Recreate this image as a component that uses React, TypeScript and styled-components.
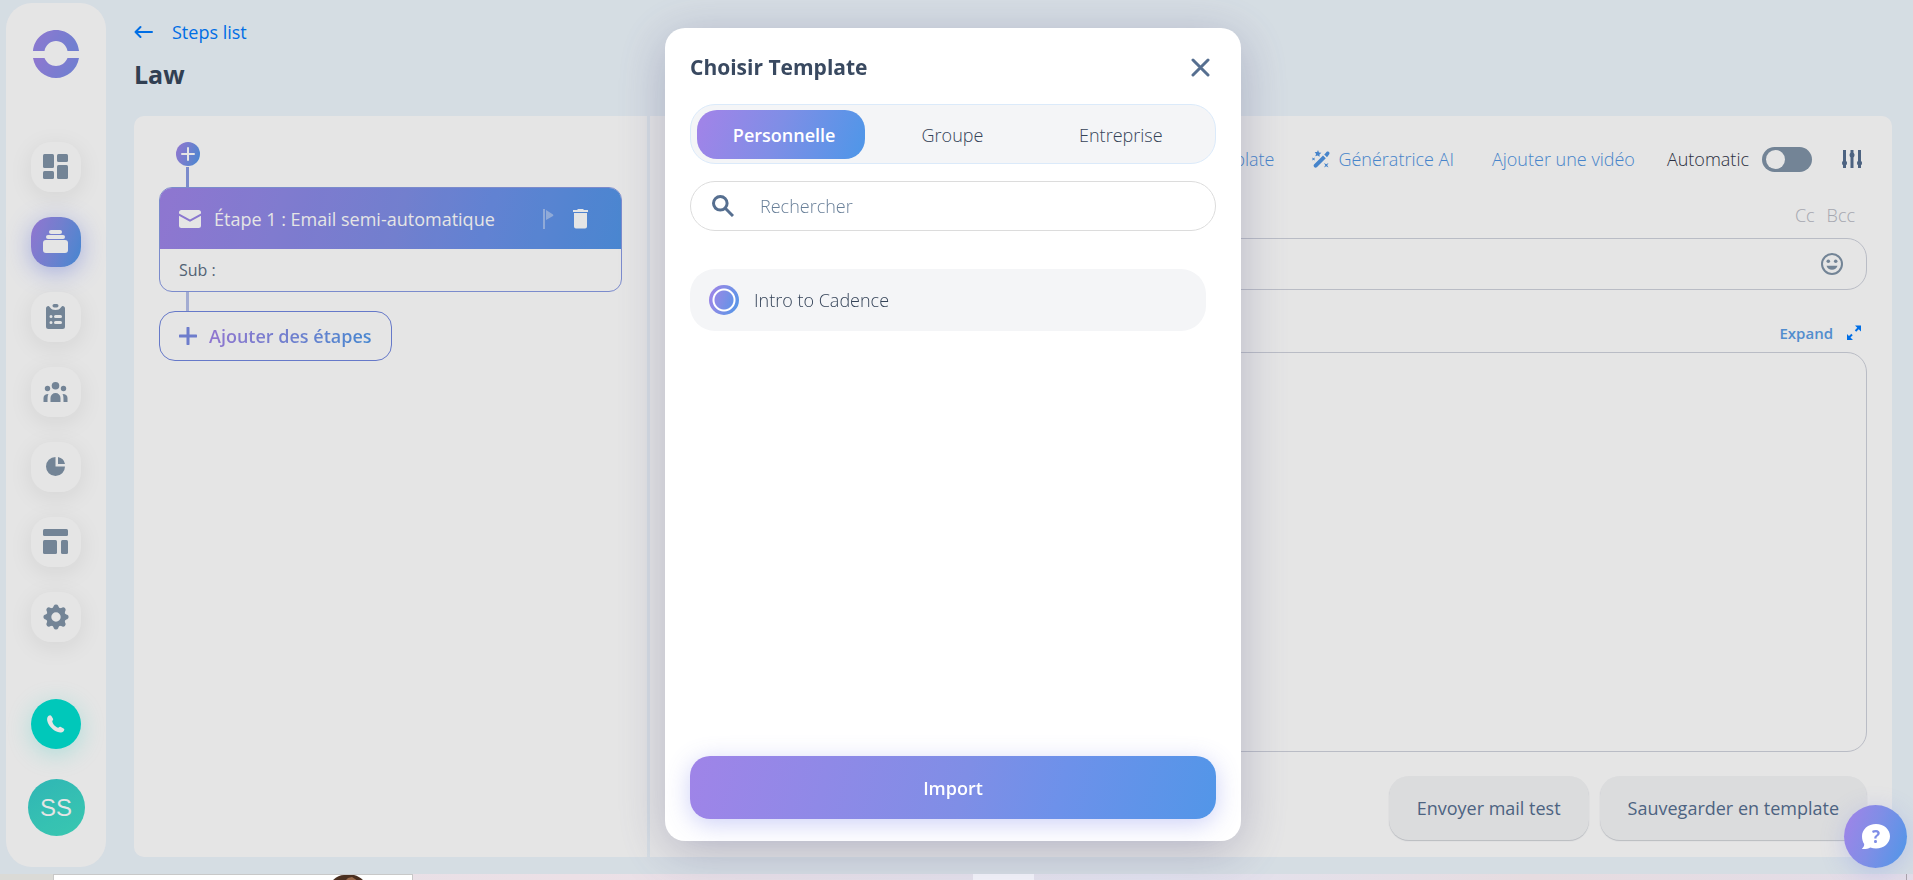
import React, { useState } from 'react';
import styled, { createGlobalStyle, css } from 'styled-components';

const gradient = 'linear-gradient(105deg, #9f84e8 0%, #7f8ee6 52%, #6d91ea 70%, #5296e8 100%)';
const shortGradient = 'linear-gradient(110deg, #9f84e8 5%, #7f8ee6 48%, #5296e8 95%)';

const GlobalStyle = createGlobalStyle`
  *, *::before, *::after { box-sizing: border-box; }
  body {
    margin: 0;
    background: #eef6fd;
    color: #344358;
    font-family: 'Open Sans', 'Liberation Sans', sans-serif;
    font-size: 18px;
    line-height: 24px;
  }
  button, input, textarea { font: inherit; color: inherit; }
  button { border: 0; padding: 0; background: none; cursor: pointer; }
  svg { display: block; flex: none; }
  a { text-decoration: none; }
`;

const Page = styled.div`
  min-height: 100vh;
  display: flex;
  flex-direction: column;
`;

const Workspace = styled.div`
  flex: 1;
  display: flex;
  gap: 28px;
  padding: 3px 21px 7px 6px;
`;

/* Sidebar */

const Sidebar = styled.aside`
  width: 100px;
  flex: none;
  display: flex;
  flex-direction: column;
  align-items: center;
  padding: 27px 0 31px;
  border-radius: 26px;
  background: #fff;
`;

const Nav = styled.nav`
  display: flex;
  flex-direction: column;
  gap: 25px;
  margin: 64px 0 56px;
`;

const NavButton = styled.button<{ $active?: boolean }>`
  width: 50px;
  height: 50px;
  display: grid;
  place-items: center;
  border-radius: 20px;
  color: ${(p) => (p.$active ? '#fff' : '#8094a8')};
  background: ${(p) => (p.$active ? shortGradient : '#fff')};
  box-shadow: 0 5px 25px ${(p) => (p.$active ? 'rgba(100, 120, 240, 0.45)' : 'rgba(0, 0, 0, 0.08)')};
`;

const CallButton = styled.button`
  width: 50px;
  height: 50px;
  display: grid;
  place-items: center;
  margin-top: auto;
  border-radius: 50%;
  color: #fff;
  background: #00dfd0;
  box-shadow: 0 5px 25px rgba(0, 223, 208, 0.25);
`;

const Avatar = styled.button`
  width: 57px;
  height: 57px;
  margin-top: 30px;
  border-radius: 50%;
  background: linear-gradient(150deg, #35cbca, #41dfc5);
  color: #fff;
  font-family: 'Liberation Sans', Arial, sans-serif;
  font-size: 24px;
`;

/* Page head and panel */

const Main = styled.main`
  flex: 1;
  min-width: 0;
  display: flex;
  flex-direction: column;
  padding: 17px 0 10px;
`;

const BackLink = styled.a`
  display: flex;
  align-items: center;
  gap: 19px;
  align-self: flex-start;
  color: #007bff;
`;

const PageTitle = styled.h1`
  margin: 13px 0 25px;
  color: #37475c;
  font-size: 25px;
  font-weight: 700;
  line-height: 34px;
`;

const Panel = styled.div`
  flex: 1;
  display: grid;
  grid-template-columns: 513px 1fr;
  gap: 3px;
  border-radius: 10px;
  overflow: hidden;
`;

const StepsColumn = styled.section`
  display: flex;
  flex-direction: column;
  align-items: flex-start;
  padding: 26px 25px;
  background: #fff;
`;

const InsertButton = styled.button`
  width: 24px;
  height: 24px;
  display: grid;
  place-items: center;
  margin-left: 17px;
  border-radius: 50%;
  background: ${shortGradient};
  color: #fff;
`;

const Connector = styled.div<{ $faint?: boolean }>`
  width: 3px;
  height: ${(p) => (p.$faint ? 19 : 20)}px;
  margin-top: ${(p) => (p.$faint ? 0 : 1)}px;
  margin-left: 27px;
  background: ${(p) => (p.$faint ? '#b6c0ea' : '#8a9be4')};
`;

const StepCard = styled.article`
  align-self: stretch;
  border: 1px solid #8a9be4;
  border-radius: 13px;
  overflow: hidden;
`;

const StepHead = styled.header`
  height: 61px;
  display: flex;
  align-items: center;
  gap: 13px;
  padding: 0 32px 0 19px;
  background: ${gradient};
  color: #fff;
`;

const StepTitle = styled.h2`
  flex: 1;
  margin: 0;
  font-size: 18px;
  font-weight: 500;
`;

const StepActions = styled.div`
  display: flex;
  align-items: center;
  gap: 19px;
`;

const StepSubject = styled.p`
  margin: 0;
  padding: 9px 19px;
  color: #5b6d82;
  font-size: 16px;
`;

const AddStepButton = styled.button`
  height: 50px;
  display: flex;
  align-items: center;
  gap: 12px;
  padding: 0 19px;
  border: 1px solid #7287e0;
  border-radius: 16px;
  color: #7b8ce4;
`;

const GradientText = styled.span`
  background: ${shortGradient};
  background-clip: text;
  color: transparent;
  font-weight: 600;
`;

/* Editor */

const Editor = styled.section`
  display: flex;
  flex-direction: column;
  padding: 28px 25px 17px 24px;
  background: #fff;
`;

const Toolbar = styled.div`
  height: 30px;
  display: flex;
  align-items: center;
  justify-content: flex-end;
  gap: 38px;
  padding-right: 5px;
  font-weight: 300;
`;

const ToolLink = styled.button`
  display: flex;
  align-items: center;
  gap: 7px;
  color: #4f94e2;
  font-weight: 300;
`;

const ToolGroup = styled.div`
  display: flex;
  align-items: center;
  gap: 30px;
  margin-left: -6px;
`;

const SwitchLabel = styled.label`
  display: flex;
  align-items: center;
  gap: 13px;
  color: #2f3447;
`;

const Switch = styled.input`
  appearance: none;
  width: 50px;
  height: 25px;
  margin: 0;
  padding: 3px 4px;
  border-radius: 13px;
  background: #8094a8;
  &::before {
    content: '';
    display: block;
    width: 19px;
    height: 19px;
    border-radius: 50%;
    background: #fff;
  }
  &:checked { background: #5296e8; }
  &:checked::before { margin-left: auto; }
`;

const IconButton = styled.button`
  display: grid;
  place-items: center;
  color: #566f90;
`;

const CopyRow = styled.div`
  display: flex;
  justify-content: flex-end;
  gap: 12px;
  margin: 29px 0 11px;
  padding-right: 12px;
`;

const CopyButton = styled.button`
  color: #b8bac4;
  font-weight: 300;
`;

const fieldFrame = css`
  border: 1px solid #cfd2dc;
  border-radius: 20px;
  background: #fff;
`;

const SubjectField = styled.div`
  ${fieldFrame}
  height: 52px;
  display: flex;
  align-items: center;
  padding: 0 23px;
`;

const SubjectInput = styled.input`
  flex: 1;
  min-width: 0;
  border: 0;
  outline: 0;
  background: none;
`;

const EmojiButton = styled.button`
  color: #8094a8;
`;

const ExpandButton = styled.button`
  align-self: flex-end;
  display: flex;
  align-items: center;
  gap: 13px;
  margin: 31px 5px 7px 0;
  color: #5b9de6;
  font-size: 15px;
  font-weight: 600;
`;

const MessageBox = styled.textarea`
  ${fieldFrame}
  flex: 1;
  width: 100%;
  min-height: 200px;
  padding: 16px;
  resize: none;
  outline: 0;
`;

const EditorFooter = styled.div`
  display: flex;
  justify-content: flex-end;
  gap: 11px;
  margin-top: 24px;
`;

const SoftButton = styled.button`
  height: 64px;
  padding: 0 28px;
  border-radius: 20px;
  background: #f4f5f7;
  box-shadow: 0 1px 1px rgba(60, 70, 90, 0.25);
  color: #566f90;
  font-weight: 500;
`;

/* Edge of the window that lies behind the app */

const Backdrop = styled.footer`
  height: 6px;
  display: flex;
  background: linear-gradient(90deg, #e2dfe8, #ece0e6 30%, #e3e3f0 60%, #e6dce0 80%, #e3dde8);
`;

const BackdropWall = styled.div`
  width: 53px;
  background: #dadad6;
`;

const BackdropCard = styled.div`
  width: 360px;
  padding-left: 278px;
  overflow: hidden;
  border: 1px solid #c8c8c8;
  border-bottom: 0;
  background: #fff;
`;

const BackdropTab = styled.div`
  width: 61px;
  margin-left: auto;
  background: #f5f5fb;
`;

const BackdropRest = styled.div`
  flex: 0 1 873px;
  margin-right: 6px;
  border-right: 1px solid #aaa4aa;
`;

/* Modal */

const Scrim = styled.div`
  position: fixed;
  inset: 0 0 6px;
  background: rgba(0, 0, 0, 0.1);
`;

const ModalLayer = styled.div`
  position: fixed;
  inset: 0;
  display: flex;
  justify-content: center;
  padding: 28px 7px 39px 0;
`;

const Modal = styled.div`
  width: 576px;
  display: flex;
  flex-direction: column;
  padding: 22px 25px;
  border-radius: 20px;
  background: #fff;
  box-shadow: 0 10px 50px rgba(70, 70, 120, 0.3);
`;

const ModalHead = styled.header`
  display: flex;
  align-items: center;
  justify-content: space-between;
  padding-right: 6px;
`;

const ModalTitle = styled.h2`
  margin: 0;
  color: #394960;
  font-size: 21px;
  font-weight: 700;
  line-height: 34px;
`;

const Tabs = styled.div`
  height: 60px;
  display: grid;
  grid-template-columns: repeat(3, 1fr);
  margin-top: 20px;
  padding: 5px 10px 4px 9px;
  border: 1px solid #dbeafa;
  border-radius: 25px;
  background: #f4f5f7;
`;

const Tab = styled.button<{ $active: boolean }>`
  border-radius: 20px;
  font-weight: 300;
  ${(p) =>
    p.$active &&
    css`
      margin: 0 3px 0 -3px;
      padding-left: 6px;
      background: ${shortGradient};
      color: #fff;
      font-weight: 600;
    `}
`;

const SearchField = styled.label`
  height: 50px;
  display: flex;
  align-items: center;
  gap: 26px;
  margin-top: 17px;
  padding: 0 21px;
  border: 1px solid #dcdcdc;
  border-radius: 25px;
  color: #566f90;
`;

const SearchInput = styled.input`
  flex: 1;
  min-width: 0;
  padding: 0;
  border: 0;
  outline: 0;
  background: none;
  font-weight: 300;
  &::placeholder { color: #687f98; opacity: 1; }
`;

const TemplateList = styled.div`
  flex: 1;
  padding: 38px 10px 0 0;
`;

const TemplateOption = styled.label`
  height: 62px;
  display: flex;
  align-items: center;
  gap: 15px;
  padding: 0 19px;
  border-radius: 25px;
  background: #f4f5f7;
  font-weight: 300;
`;

const Radio = styled.input`
  appearance: none;
  width: 30px;
  height: 30px;
  margin: 0;
  border-radius: 50%;
  background: radial-gradient(circle, transparent 9px, #fff 10px 11px, transparent 12px), ${shortGradient};
`;

const ImportButton = styled.button`
  height: 63px;
  border-radius: 20px;
  background: ${gradient};
  box-shadow: 0 5px 25px rgba(90, 100, 230, 0.3);
  color: #fff;
  font-weight: 600;
`;

const HelpButton = styled.button`
  position: fixed;
  right: 6px;
  bottom: 12px;
  width: 63px;
  height: 63px;
  display: grid;
  place-items: center;
  border-radius: 50%;
  background: ${shortGradient};
  box-shadow: 0 5px 25px rgba(100, 120, 240, 0.25);
`;

/* Drawings */

const Logo = () => (
  <svg width="48" height="48" viewBox="0 0 48 48" role="img" aria-label="Logo">
    <defs>
      <linearGradient id="logo" x1="0" y1="0" x2="1" y2="0.3">
        <stop offset="0" stopColor="#a085e8" />
        <stop offset="1" stopColor="#7e8ee8" />
      </linearGradient>
    </defs>
    <path fill="url(#logo)" d="M1 21C2 9 12 0 24 0s22 9 23 21H35.5c-1-6-6-10-11.5-10s-10.500 4-11.500 10z" />
    <path fill="url(#logo)" d="M1 28h11.500c2 5 6.500 8 11.500 8s9.500-3 11.500-8H47c-2 12-12 20-23 20S3 40 1 28z" />
  </svg>
);

const DashboardIcon = () => (
  <svg width="26" height="26" viewBox="0 0 26 26" fill="currentColor">
    <rect width="11" height="14" rx="1.5" /><rect x="14" width="11" height="8" rx="1.5" />
    <rect y="17" width="11" height="8" rx="1.5" /><rect x="14" y="11" width="11" height="14" rx="1.5" />
  </svg>
);

const CadenceIcon = () => (
  <svg width="26" height="26" viewBox="0 0 26 26" fill="currentColor">
    <rect x="6" y="1" width="13" height="4" rx="2" /><rect x="3" y="6" width="19" height="4" rx="2" />
    <rect y="11" width="25" height="13" rx="3" />
  </svg>
);

const TasksIcon = () => (
  <svg width="20" height="26" viewBox="0 0 20 26" fill="currentColor">
    <rect x="6.5" width="6" height="3.5" rx="1.7" />
    <path fillRule="evenodd" d="M2.500 2C4 2 4 6 9.500 6S15 2 16.500 2C18 2 19 3 19 4.500V22.500A2.500 2.500 0 0 1 16.500 25h-14A2.500 2.500 0 0 1 0 22.500V4.500C0 3 1 2 2.500 2zM5 11a1.500 1.500 0 1 0 0 3 1.500 1.500 0 0 0 0-3zm4.500 0a1.500 1.500 0 0 0 0 3h5a1.500 1.500 0 0 0 0-3zM5 17a1.500 1.500 0 1 0 0 3 1.500 1.500 0 0 0 0-3zm4.500 0a1.500 1.500 0 0 0 0 3h5a1.500 1.500 0 0 0 0-3z" />
  </svg>
);

const PeopleIcon = () => (
  <svg width="26" height="20" viewBox="0 0 26 20" fill="currentColor">
    <circle cx="12.5" cy="3.8" r="3.8" /><circle cx="4.5" cy="6.5" r="2.7" /><circle cx="20.5" cy="6.5" r="2.7" />
    <path d="M7.500 20v-4a5 5 0 0 1 10 0v4zM.5 20v-4c0-2.600 2-4 5-4-1 1.500-1 4-1 8zM24.500 20v-4c0-2.600-2-4-5-4 1 1.500 1 4 1 8z" />
  </svg>
);

const PieIcon = () => (
  <svg width="20" height="20" viewBox="0 0 20 20" fill="currentColor">
    <path d="M9.500 0v9.500H19A9.500 9.500 0 1 1 9.500 0z" /><path d="M12 0a9 9 0 0 1 7 7h-7z" />
  </svg>
);

const LayoutIcon = () => (
  <svg width="26" height="26" viewBox="0 0 26 26" fill="currentColor">
    <rect width="25" height="7" rx="1.5" /><rect y="11" width="14" height="14" rx="1.5" /><rect x="18" y="11" width="7" height="14" rx="1.5" />
  </svg>
);

const GearIcon = () => (
  <svg width="26" height="26" viewBox="-13 -13 26 26">
    <circle r="7.2" fill="none" stroke="currentColor" strokeWidth="5" />
    {[0, 45, 90, 135, 180, 225, 270, 315].map((a) => (
      <path key={a} transform={`rotate(${a})`} fill="currentColor" d="M-4.200-8.500C-3-9-2.600-10-2.200-11.200Q-1.600-12.600 0-12.600T2.200-11.200C2.600-10 3-9 4.200-8.500z" />
    ))}
  </svg>
);

const PhoneIcon = () => (
  <svg width="18" height="18" viewBox="0 0 18 18" fill="currentColor">
    <path d="M1.600.7C2.800-.2 3.800 0 4.400 1l1.500 2.600c.5.900.2 1.500-.7 2.400.4 3 3 6 6.200 6.800.9-1.100 1.500-1.400 2.500-.9l2.700 1.500c.9.600 1 1.500.2 2.500-1.300 1.600-3.600 2-5.900 1.200C5.500 15 1 10.200.2 5.400-.1 3.500.3 1.800 1.600.7z" />
  </svg>
);

const ArrowLeft = () => (
  <svg width="19" height="14" viewBox="0 0 19 14" fill="none" stroke="currentColor" strokeWidth="2" strokeLinecap="round" strokeLinejoin="round">
    <path d="M18 7H1.500M6.500 2l-5 5 5 5" />
  </svg>
);

const PlusIcon = ({ size, weight }: { size: number; weight: number }) => (
  <svg width={size} height={size} viewBox={`0 0 ${size} ${size}`} stroke="currentColor" strokeWidth={weight} strokeLinecap="round">
    <path d={`M${size / 2} 1v${size - 2}M1 ${size / 2}h${size - 2}`} />
  </svg>
);

const MailIcon = () => (
  <svg width="22" height="18" viewBox="0 0 22 18" fill="currentColor">
    <path d="M2.500 0h17A2.500 2.500 0 0 1 22 2.500v1L11 9.500 0 3.500v-1A2.500 2.500 0 0 1 2.500 0z" />
    <path d="M0 5.800l11 6 11-6v9.700a2.500 2.500 0 0 1-2.500 2.500h-17A2.500 2.500 0 0 1 0 15.500z" />
  </svg>
);

const FlagIcon = () => (
  <svg width="11" height="20" viewBox="0 0 11 20" fill="currentColor" opacity="0.4">
    <rect width="2" height="20" /><path d="M3 1l7 4.500a1 1 0 0 1 0 1.500L3 11z" />
  </svg>
);

const TrashIcon = () => (
  <svg width="16" height="20" viewBox="0 0 16 20" fill="currentColor">
    <path d="M5 0h5l1 1h4v2H0V1h4zM1 4h13v13.500a2 2 0 0 1-2 2H3a2 2 0 0 1-2-2z" />
  </svg>
);

const WandIcon = () => (
  <svg width="19" height="19" viewBox="0 0 19 19" fill="currentColor">
    <path d="M2 14.500L11 5.500l2.800 2.800-9 9a2 2 0 0 1-2.800-2.800zM12.200 4.500l1.500-1.600c1-1.200 1.500-1.500 2.500-1.300 1.200.3 1.700 1.700 1 2.700l-2.200 2.900z" />
    <path d="M6 0l1 2.400 2.400.4-1.900 1.600.1 2.400-2-1.200-2.300.7.800-2.300L2.700 2l2.400.1zM0 7.500l1.500.7L3 7.500l-.7 1.500.7 1.500-1.500-.7-1.500.7L.7 9z" />
    <path d="M12 13l2.200 1.300L16.500 13l-1.300 2.300 1.300 2.200-2.300-1.300-2.200 1.300 1.300-2.200z" />
  </svg>
);

const SlidersIcon = () => (
  <svg width="20" height="18" viewBox="0 0 20 18" stroke="currentColor" strokeWidth="3" fill="currentColor">
    <path d="M2.500 0v18M10 0v18M17.500 0v18" />
    <g stroke="none"><circle cx="2.5" cy="13" r="2.5" /><circle cx="10" cy="5" r="2.5" /><circle cx="17.5" cy="13" r="2.5" /></g>
  </svg>
);

const SmileIcon = () => (
  <svg width="22" height="22" viewBox="0 0 22 22" fill="currentColor">
    <circle cx="11" cy="11" r="10" fill="none" stroke="currentColor" strokeWidth="2" />
    <circle cx="7.3" cy="8.3" r="1.8" /><circle cx="14.7" cy="8.3" r="1.8" />
    <path d="M5.500 12.700h11a5.800 5.800 0 0 1-11 0z" />
  </svg>
);

const ExpandIcon = () => (
  <svg width="16" height="16" viewBox="0 0 16 16" fill="#007bff" stroke="#007bff">
    <path d="M9 .5h6v6zM1 9v6h6z" stroke="none" /><path d="M9.500 6L13 2.500M6 9.500L2.500 13" strokeWidth="2" />
  </svg>
);

const CloseIcon = () => (
  <svg width="19" height="19" viewBox="0 0 19 19" stroke="currentColor" strokeWidth="3" strokeLinecap="round">
    <path d="M2 2l15 15M17 2L2 17" />
  </svg>
);

const SearchIcon = () => (
  <svg width="22" height="22" viewBox="0 0 22 22" fill="none" stroke="currentColor" strokeWidth="3">
    <circle cx="8.3" cy="8.3" r="6.8" /><path d="M13 13l8 8" />
  </svg>
);

const HelpIcon = () => (
  <svg width="30" height="26" viewBox="0 0 30 26">
    <path fill="#fff" d="M15 0c8 0 14 5.500 14 12.200S23 24.500 15 24.500c-2 0-4-.3-5.700-1C7 25 4 25.200.8 25c1.500-1.500 2.500-3 2.400-5C1.800 18 1 15.200 1 12.200 1 5.500 7 0 15 0z" />
    <text x="15" y="18.5" textAnchor="middle" fill="#7f8ee6" fontSize="17" fontWeight="700">?</text>
  </svg>
);

const HairDrawing = () => (
  <svg width="32" height="6" viewBox="0 0 32 6">
    <path fill="#4a2f20" d="M0 6C4 2 8 0 12 0h10c4 1 7 3 10 6z" /><path fill="#9a6a4c" d="M13 6l3-3 4-1 6 4z" />
  </svg>
);

const navItems = [
  { label: 'Dashboard', icon: <DashboardIcon /> },
  { label: 'Cadences', icon: <CadenceIcon /> },
  { label: 'Tasks', icon: <TasksIcon /> },
  { label: 'People', icon: <PeopleIcon /> },
  { label: 'Statistics', icon: <PieIcon /> },
  { label: 'Templates', icon: <LayoutIcon /> },
  { label: 'Settings', icon: <GearIcon /> },
];

const tabs = ['Personnelle', 'Groupe', 'Entreprise'];

export default function App() {
  const [tab, setTab] = useState('Personnelle');
  return (
    <Page>
      <GlobalStyle />
      <Workspace>
        <Sidebar>
          <Logo />
          <Nav>
            {navItems.map((item) => (
              <NavButton key={item.label} aria-label={item.label} $active={item.label === 'Cadences'}>
                {item.icon}
              </NavButton>
            ))}
          </Nav>
          <CallButton aria-label="Call"><PhoneIcon /></CallButton>
          <Avatar>SS</Avatar>
        </Sidebar>

        <Main>
          <BackLink href="#steps"><ArrowLeft />Steps list</BackLink>
          <PageTitle>Law</PageTitle>
          <Panel>
            <StepsColumn>
              <InsertButton aria-label="Insert step"><PlusIcon size={14} weight={2} /></InsertButton>
              <Connector />
              <StepCard>
                <StepHead>
                  <MailIcon />
                  <StepTitle>Étape 1 : Email semi-automatique</StepTitle>
                  <StepActions>
                    <button aria-label="Flag"><FlagIcon /></button>
                    <button aria-label="Delete"><TrashIcon /></button>
                  </StepActions>
                </StepHead>
                <StepSubject>Sub :</StepSubject>
              </StepCard>
              <Connector $faint />
              <AddStepButton>
                <PlusIcon size={18} weight={3} />
                <GradientText>Ajouter des étapes</GradientText>
              </AddStepButton>
            </StepsColumn>

            <Editor>
              <Toolbar>
                <ToolLink>Importer un template</ToolLink>
                <ToolLink><WandIcon />Génératrice AI</ToolLink>
                <ToolLink>Ajouter une vidéo</ToolLink>
                <ToolGroup>
                  <SwitchLabel>Automatic<Switch type="checkbox" /></SwitchLabel>
                  <IconButton aria-label="Options"><SlidersIcon /></IconButton>
                </ToolGroup>
              </Toolbar>
              <CopyRow>
                <CopyButton>Cc</CopyButton>
                <CopyButton>Bcc</CopyButton>
              </CopyRow>
              <SubjectField>
                <SubjectInput aria-label="Subject" />
                <EmojiButton aria-label="Emoji"><SmileIcon /></EmojiButton>
              </SubjectField>
              <ExpandButton>Expand<ExpandIcon /></ExpandButton>
              <MessageBox aria-label="Message" />
              <EditorFooter>
                <SoftButton>Envoyer mail test</SoftButton>
                <SoftButton>Sauvegarder en template</SoftButton>
              </EditorFooter>
            </Editor>
          </Panel>
        </Main>
      </Workspace>

      <Backdrop>
        <BackdropWall />
        <BackdropCard><HairDrawing /></BackdropCard>
        <BackdropTab />
        <BackdropRest />
      </Backdrop>

      <Scrim />
      <ModalLayer>
        <Modal role="dialog" aria-modal="true" aria-labelledby="modal-title">
          <ModalHead>
            <ModalTitle id="modal-title">Choisir Template</ModalTitle>
            <IconButton aria-label="Close"><CloseIcon /></IconButton>
          </ModalHead>
          <Tabs role="tablist">
            {tabs.map((name) => (
              <Tab key={name} role="tab" aria-selected={name === tab} $active={name === tab} onClick={() => setTab(name)}>
                {name}
              </Tab>
            ))}
          </Tabs>
          <SearchField>
            <SearchIcon />
            <SearchInput type="text" placeholder="Rechercher" aria-label="Rechercher" />
          </SearchField>
          <TemplateList>
            <TemplateOption>
              <Radio type="radio" name="template" defaultChecked />
              Intro to Cadence
            </TemplateOption>
          </TemplateList>
          <ImportButton>Import</ImportButton>
        </Modal>
      </ModalLayer>
      <HelpButton aria-label="Help"><HelpIcon /></HelpButton>
    </Page>
  );
}
